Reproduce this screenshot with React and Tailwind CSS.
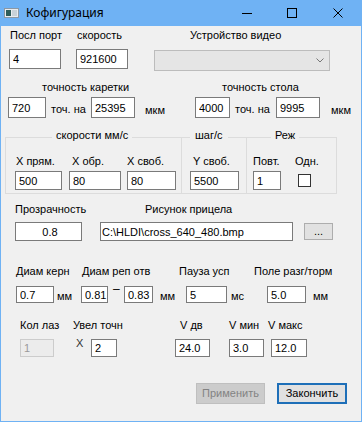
import React from "react";

const base =
  "block shrink-0 border border-[#7a7a7a] bg-white pl-[3px] text-[11px] leading-[13px] text-black outline-none font-['Liberation_Sans',Arial,sans-serif]";

function Field({ className = "", value }) {
  return <input readOnly defaultValue={value} className={`${base} ${className}`} />;
}

export default function App() {
  return (
    <div className="flex h-[422px] w-[362px] flex-col font-['Liberation_Sans',Arial,sans-serif] text-[11px] leading-[13px] text-black">
      {/* Title bar */}
      <div className="flex h-[26px] shrink-0 items-center bg-[#6fb2f4]">
        <svg className="ml-[4px] shrink-0" width="15" height="10" viewBox="0 0 15 10">
          <rect x="0.5" y="0.5" width="14" height="9" fill="#e9ecef" stroke="#8c98a4" />
          <rect x="2" y="2" width="5" height="6" fill="#2e5d5a" />
          <rect x="8" y="2" width="5" height="6" fill="#c9d2d8" />
        </svg>
        <span className="ml-[7px] font-['Noto_Sans',sans-serif] text-[12px] leading-[16px]">Кофигурация</span>
        <div className="ml-auto mr-[19px] flex items-center">
          <svg width="10" height="10" viewBox="0 0 10 10">
            <line x1="0" y1="5.5" x2="10" y2="5.5" stroke="#000" strokeWidth="1" />
          </svg>
          <svg className="ml-[35px]" width="10" height="10" viewBox="0 0 10 10">
            <rect x="0.5" y="0.5" width="9" height="9" fill="none" stroke="#000" strokeWidth="1" />
          </svg>
          <svg className="ml-[36px]" width="10" height="10" viewBox="0 0 10 10">
            <path d="M0.5 0.5 L9.5 9.5 M9.5 0.5 L0.5 9.5" stroke="#000" strokeWidth="1" />
          </svg>
        </div>
      </div>

      {/* Body */}
      <div className="flex flex-1 flex-col border-x border-b border-[#6fb2f4] bg-[#f0f0f0]">
        {/* Row 1 labels */}
        <div className="mt-[3px] flex h-[13px]">
          <span className="ml-[9px] w-[67px] shrink-0">Посл порт</span>
          <span className="w-[113px] shrink-0">скорость</span>
          <span>Устройство видео</span>
        </div>
        {/* Row 1 inputs */}
        <div className="mt-[7px] flex h-[22px] items-start">
          <Field className="ml-[8px] h-[20px] w-[52px]" value="4" />
          <Field className="ml-[15px] h-[20px] w-[52px]" value="921600" />
          <div className="ml-[26px] mt-[1px] flex h-[21px] w-[176px] shrink-0 items-center justify-end border border-[#bcbcbc] bg-[#e5e5e5] pr-[5px]">
            <svg width="8" height="5" viewBox="0 0 8 5">
              <path d="M0.5 0.5 L4 4 L7.5 0.5" fill="none" stroke="#777" strokeWidth="1" />
            </svg>
          </div>
        </div>

        {/* Row 2 labels */}
        <div className="mt-[10px] flex h-[13px]">
          <span className="ml-[41px] w-[180px] shrink-0">точность каретки</span>
          <span>точность стола</span>
        </div>
        {/* Row 2 inputs */}
        <div className="mt-[3px] flex h-[21px] items-start">
          <Field className="ml-[7px] h-[21px] w-[38px]" value="720" />
          <span className="ml-[5px] mt-[6px] w-[40px] shrink-0">точ. на</span>
          <Field className="h-[21px] w-[44px]" value="25395" />
          <span className="ml-[10px] mt-[7px] w-[50px] shrink-0">мкм</span>
          <Field className="h-[21px] w-[35px]" value="4000" />
          <span className="ml-[5px] mt-[6px] w-[41px] shrink-0">точ. на</span>
          <Field className="h-[21px] w-[44px]" value="9995" />
          <span className="ml-[11px] mt-[7px] shrink-0">мкм</span>
        </div>

        {/* Group boxes */}
        <div className="mt-[19px] flex h-[57px]">
          <div className="relative ml-[4px] flex h-[57px] w-[177px] shrink-0 flex-col border border-[#dcdcdc]">
            <span className="absolute left-[46px] top-[-9px] bg-[#f0f0f0] px-[4px]">скорости мм/с</span>
            <div className="mt-[17px] flex h-[13px]">
              <span className="ml-[10px] w-[56px] shrink-0">X прям.</span>
              <span className="w-[55px] shrink-0">X обр.</span>
              <span>X своб.</span>
            </div>
            <div className="mt-[3px] flex">
              <Field className="ml-[9px] h-[19px] w-[47px]" value="500" />
              <Field className="ml-[7px] h-[19px] w-[52px]" value="80" />
              <Field className="ml-[6px] h-[19px] w-[49px]" value="80" />
            </div>
          </div>
          <div className="relative flex h-[57px] w-[65px] shrink-0 flex-col border-y border-r border-[#dcdcdc]">
            <span className="absolute left-[8px] top-[-9px] bg-[#f0f0f0] px-[5px]">шаг/с</span>
            <div className="mt-[17px] flex h-[13px]">
              <span className="ml-[11px]">Y своб.</span>
            </div>
            <div className="mt-[3px] flex">
              <Field className="ml-[8px] h-[19px] w-[49px]" value="5500" />
            </div>
          </div>
          <div className="relative flex h-[57px] w-[90px] shrink-0 flex-col border-y border-r border-[#dcdcdc]">
            <span className="absolute left-[24px] top-[-9px] bg-[#f0f0f0] px-[4px]">Реж</span>
            <div className="mt-[17px] flex h-[13px]">
              <span className="ml-[6px] w-[42px] shrink-0">Повт.</span>
              <span>Одн.</span>
            </div>
            <div className="mt-[3px] flex items-start">
              <Field className="ml-[6px] h-[19px] w-[28px]" value="1" />
              <div className="ml-[17px] mt-[3px] h-[13px] w-[13px] shrink-0 border border-[#333333] bg-white" />
            </div>
          </div>
        </div>

        {/* Прозрачность row */}
        <div className="mt-[9px] flex h-[13px]">
          <span className="ml-[14px] w-[130px] shrink-0">Прозрачность</span>
          <span>Рисунок прицела</span>
        </div>
        <div className="mt-[6px] flex h-[19px] items-start">
          <Field className="ml-[14px] h-[19px] w-[67px] text-center" value="0.8" />
          <Field className="ml-[18px] h-[19px] w-[193px] !pl-[1px]" value="C:\HLDI\cross_640_480.bmp" />
          <button className="ml-[11px] mt-[1px] flex h-[17px] w-[29px] shrink-0 items-center justify-center border border-[#adadad] bg-[#e1e1e1] text-[11px] leading-[13px] text-black">
            ...
          </button>
        </div>

        {/* Диам row */}
        <div className="mt-[24px] flex h-[13px]">
          <span className="ml-[15px] w-[66px] shrink-0">Диам керн</span>
          <span className="w-[97px] shrink-0">Диам реп отв</span>
          <span className="w-[75px] shrink-0">Пауза усп</span>
          <span>Поле разг/торм</span>
        </div>
        <div className="mt-[8px] flex h-[17px] items-start">
          <Field className="ml-[15px] h-[17px] w-[38px]" value="0.7" />
          <span className="ml-[3px] mt-[4px] w-[24px] shrink-0">мм</span>
          <Field className="h-[17px] w-[27px]" value="0.81" />
          <span className="-mt-[3px] w-[16px] shrink-0 pl-[5px] text-[12px] leading-[13px]">–</span>
          <Field className="h-[17px] w-[29px]" value="0.83" />
          <span className="ml-[7px] mt-[4px] w-[26px] shrink-0">мм</span>
          <Field className="h-[17px] w-[41px]" value="5" />
          <span className="ml-[4px] mt-[4px] w-[36px] shrink-0">мс</span>
          <Field className="h-[17px] w-[39px]" value="5.0" />
          <span className="ml-[7px] mt-[4px] shrink-0">мм</span>
        </div>

        {/* Кол лаз row */}
        <div className="mt-[16px] flex h-[13px]">
          <span className="ml-[19px] w-[53px] shrink-0">Кол лаз</span>
          <span className="w-[107px] shrink-0">Увел точн</span>
          <span className="w-[49px] shrink-0">V дв</span>
          <span className="w-[39px] shrink-0">V мин</span>
          <span>V макс</span>
        </div>
        <div className="mt-[7px] flex h-[18px] items-start">
          <input
            readOnly
            disabled
            defaultValue="1"
            className="ml-[19px] block h-[18px] w-[34px] shrink-0 border border-[#cccccc] bg-[#ececec] pl-[3px] text-[11px] leading-[13px] text-[#9a9a9a] outline-none font-['Liberation_Sans',Arial,sans-serif]"
          />
          <span className="ml-[22px] -mt-[2px] w-[15px] shrink-0 text-[#333333]">X</span>
          <Field className="h-[18px] w-[26px]" value="2" />
          <Field className="ml-[58px] h-[18px] w-[35px]" value="24.0" />
          <Field className="ml-[19px] h-[18px] w-[35px]" value="3.0" />
          <Field className="ml-[7px] h-[18px] w-[36px]" value="12.0" />
        </div>

        {/* Buttons */}
        <div className="mt-[26px] flex h-[21px]">
          <button
            disabled
            className="ml-[195px] flex h-[21px] w-[69px] shrink-0 items-center justify-center border border-[#bfbfbf] bg-[#cccccc] text-[11px] leading-[13px] text-[#838383]"
          >
            Применить
          </button>
          <button className="ml-[12px] flex h-[21px] w-[70px] shrink-0 items-center justify-center border-2 border-[#1e6fb8] bg-[#e1e1e1] text-[11px] leading-[13px] text-black">
            Закончить
          </button>
        </div>
      </div>
    </div>
  );
}
